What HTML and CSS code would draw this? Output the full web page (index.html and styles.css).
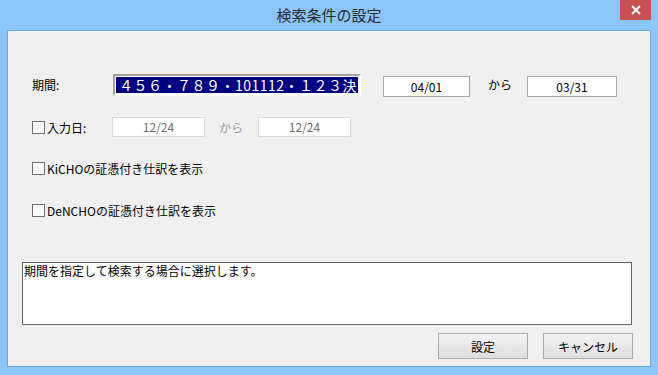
FILE: index.html
```html
<!DOCTYPE html>
<html lang="ja">

<head>
    <meta charset="UTF-8">
    <meta name="viewport" content="width=device-width, initial-scale=1.0">
    <title>検索条件の設定</title>
    <link rel="stylesheet" href="styles.css">
</head>

<body>
    <div class="window">
        <div class="titlebar">
            <div class="title">検索条件の設定</div>
            <div class="close">
                <svg width="10" height="10" viewBox="0 0 10 10">
                    <path d="M1 1 L9 9 M9 1 L1 9" stroke="#ffffff" stroke-width="2" fill="none" />
                </svg>
            </div>
        </div>

        <div class="content">
            <div class="row row-period">
                <span class="label">期間:</span>
                <div class="combo">
                    <div class="combo-sel">４５６・７８９・101112・１２３決</div>
                </div>
                <div class="date-box">04/01</div>
                <span class="kara">から</span>
                <div class="date-box wide">03/31</div>
            </div>

            <div class="row row-input">
                <div class="check-label">
                    <span class="checkbox"></span>
                    <span>入力日:</span>
                </div>
                <div class="date-box disabled">12/24</div>
                <span class="kara disabled-text">から</span>
                <div class="date-box disabled">12/24</div>
            </div>

            <div class="row row-check">
                <span class="checkbox"></span>
                <span>KiCHOの証憑付き仕訳を表示</span>
            </div>

            <div class="row row-check second">
                <span class="checkbox"></span>
                <span>DeNCHOの証憑付き仕訳を表示</span>
            </div>

            <div class="help-box">期間を指定して検索する場合に選択します。</div>

            <div class="buttons">
                <button class="btn">設定</button>
                <button class="btn">キャンセル</button>
            </div>
        </div>
    </div>
</body>

</html>
```

FILE: styles.css
```css
body {
    margin: 0;
}

.window {
    width: 658px;
    height: 375px;
    box-sizing: border-box;
    padding: 0 7px 8px 7px;
    background-color: #8cc5f8;
    display: flex;
    flex-direction: column;
    font-family: "Noto Sans CJK JP", sans-serif;
    font-size: 12px;
    color: #000000;
}

.titlebar {
    height: 30px;
    display: flex;
    align-items: flex-start;
}

.title {
    flex: 1;
    padding-left: 31px;
    text-align: center;
    font-size: 15px;
    line-height: 30px;
    color: #2b2b2b;
}

.close {
    width: 31px;
    height: 20px;
    background-color: #c75050;
    display: flex;
    align-items: center;
    justify-content: center;
}

.content {
    flex: 1;
    background-color: #f0f0f0;
    border: 1px solid #6fa8dc;
    display: flex;
    flex-direction: column;
}

.row {
    display: flex;
    align-items: center;
    padding-left: 24px;
}

.row-period {
    margin-top: 42px;
    height: 23px;
}

.label {
    width: 81px;
}

.combo {
    width: 248px;
    height: 22px;
    box-sizing: border-box;
    border-style: solid;
    border-width: 2px;
    border-color: #a0a0a0 #ffffff #ffffff #a0a0a0;
    padding: 1px;
    background-color: #ffffff;
}

.combo-sel {
    height: 100%;
    background-color: #000080;
    color: #ffffff;
    font-size: 14px;
    line-height: 16px;
    letter-spacing: 0.5px;
    padding-left: 3px;
    white-space: nowrap;
}

.date-box {
    width: 87px;
    height: 21px;
    box-sizing: border-box;
    margin-top: 3px;
    margin-left: 22px;
    border: 1px solid #ababab;
    background-color: #ffffff;
    text-align: center;
    line-height: 19px;
}

.kara {
    width: 39px;
    margin-left: 18px;
}

.kara + .date-box {
    margin-left: 0;
}

.date-box.wide {
    width: 90px;
}

.row-input {
    margin-top: 21px;
    height: 20px;
}

.check-label {
    width: 80px;
    display: flex;
    align-items: center;
}

.checkbox {
    width: 13px;
    height: 13px;
    box-sizing: border-box;
    border: 1px solid #707070;
    background-color: #fbfbfb;
    margin-right: 2px;
}

.date-box.disabled {
    width: 93px;
    height: 20px;
    margin-top: 0;
    margin-left: 0;
    border-color: #d9d9d9;
    color: #6d6d6d;
    line-height: 18px;
}

.kara.disabled-text {
    margin-left: 14px;
    color: #a0a0a0;
}

.row-check {
    margin-top: 21px;
    height: 20px;
}

.row-check.second {
    margin-top: 22px;
}

.help-box {
    width: 610px;
    height: 63px;
    box-sizing: border-box;
    margin: 42px 0 0 14px;
    border: 1px solid #646464;
    background-color: #ffffff;
    padding: 1px 0 0 1px;
    line-height: 14px;
}

.buttons {
    margin-top: 8px;
    padding-right: 17px;
    display: flex;
    justify-content: flex-end;
    gap: 15px;
}

.btn {
    width: 90px;
    height: 26px;
    border: 1px solid #acacac;
    background: linear-gradient(#f4f4f4, #dedede);
    font-family: "Noto Sans CJK JP", sans-serif;
    font-size: 12px;
    color: #000000;
    padding: 0;
}
```
